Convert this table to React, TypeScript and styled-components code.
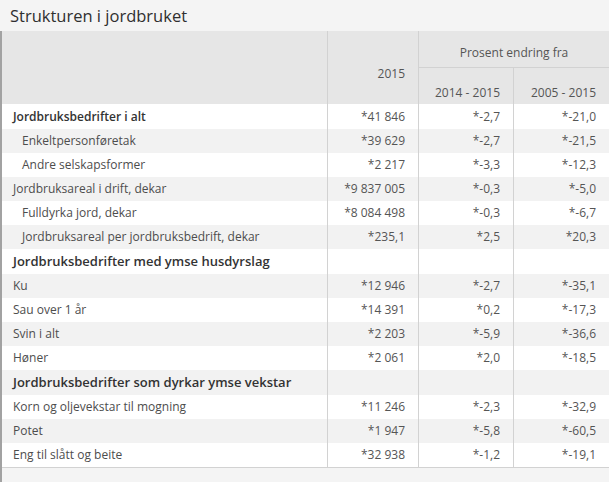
import React from 'react';
import styled, { createGlobalStyle } from 'styled-components';

const Global = createGlobalStyle`
  html, body { margin: 0; padding: 0; background: #f4f4f4; }
  body { font-family: "Open Sans", "Liberation Sans", sans-serif; }
`;

const Page = styled.div`
  width: 609px;
  height: 482px;
  overflow: hidden;
  background: #f4f4f4;
`;

const Title = styled.h2`
  margin: 0;
  height: 31px;
  line-height: 31px;
  padding-left: 10px;
  font-size: 16.5px;
  font-weight: 400;
  color: #2f2f2f;
  background: #f4f4f4;
`;

const Frame = styled.div`
  border-left: 2px solid #a2a2a2;
  height: 451px;
  background: #f4f4f4;
`;

const Table = styled.table`
  width: 607px;
  table-layout: fixed;
  border-collapse: separate;
  border-spacing: 0;
  border-bottom: 1px solid #d2d2d2;
  font-size: 12px;
  color: #4d4d4d;
`;

const HeadCell = styled.th<{ $pt: number; $pb: number; $center?: boolean; $divider?: boolean; $underline?: boolean }>`
  background: #e6e6e6;
  font-weight: 400;
  color: #555;
  line-height: 16px;
  padding: ${(p) => p.$pt}px 13px ${(p) => p.$pb}px;
  text-align: ${(p) => (p.$center ? 'center' : 'right')};
  vertical-align: top;
  border-left: ${(p) => (p.$divider ? '1px solid #d2d2d2' : 'none')};
  border-bottom: ${(p) => (p.$underline ? '1px solid #d2d2d2' : 'none')};
  white-space: nowrap;
`;

const Row = styled.tr`
  background: #fff;
  &:nth-child(even) {
    background: #f2f2f2;
  }
  &:first-child td {
    padding-top: 5px;
  }
`;

const LabelCell = styled.td<{ $kind: 'total' | 'section' | 'item' | 'sub' }>`
  padding: 4px 8px 4px ${(p) => (p.$kind === 'sub' ? 20 : 11)}px;
  font-size: ${(p) => (p.$kind === 'section' ? 13 : 12)}px;
  line-height: ${(p) => (p.$kind === 'section' ? 17 : 16)}px;
  font-weight: ${(p) => (p.$kind === 'section' || p.$kind === 'total' ? 600 : 400)};
  color: ${(p) => (p.$kind === 'section' || p.$kind === 'total' ? '#333' : '#4d4d4d')};
  white-space: nowrap;
  overflow: hidden;
`;

const ValueCell = styled.td`
  padding: 4px 13px 4px 4px;
  line-height: 16px;
  text-align: right;
  border-left: 1px solid #d2d2d2;
  white-space: nowrap;
  color: #555;
`;

type Kind = 'total' | 'section' | 'item' | 'sub';
const rows: { label: string; kind: Kind; v?: [string, string, string] }[] = [
  { label: 'Jordbruksbedrifter i alt', kind: 'total', v: ['*41 846', '*-2,7', '*-21,0'] },
  { label: 'Enkeltpersonføretak', kind: 'sub', v: ['*39 629', '*-2,7', '*-21,5'] },
  { label: 'Andre selskapsformer', kind: 'sub', v: ['*2 217', '*-3,3', '*-12,3'] },
  { label: 'Jordbruksareal i drift, dekar', kind: 'item', v: ['*9 837 005', '*-0,3', '*-5,0'] },
  { label: 'Fulldyrka jord, dekar', kind: 'sub', v: ['*8 084 498', '*-0,3', '*-6,7'] },
  { label: 'Jordbruksareal per jordbruksbedrift, dekar', kind: 'sub', v: ['*235,1', '*2,5', '*20,3'] },
  { label: 'Jordbruksbedrifter med ymse husdyrslag', kind: 'section' },
  { label: 'Ku', kind: 'item', v: ['*12 946', '*-2,7', '*-35,1'] },
  { label: 'Sau over 1 år', kind: 'item', v: ['*14 391', '*0,2', '*-17,3'] },
  { label: 'Svin i alt', kind: 'item', v: ['*2 203', '*-5,9', '*-36,6'] },
  { label: 'Høner', kind: 'item', v: ['*2 061', '*2,0', '*-18,5'] },
  { label: 'Jordbruksbedrifter som dyrkar ymse vekstar', kind: 'section' },
  { label: 'Korn og oljevekstar til mogning', kind: 'item', v: ['*11 246', '*-2,3', '*-32,9'] },
  { label: 'Potet', kind: 'item', v: ['*1 947', '*-5,8', '*-60,5'] },
  { label: 'Eng til slått og beite', kind: 'item', v: ['*32 938', '*-1,2', '*-19,1'] },
];

export default function App() {
  return (
    <Page>
      <Global />
      <Title>Strukturen i jordbruket</Title>
      <Frame>
        <Table>
          <colgroup>
            <col style={{ width: 325 }} />
            <col style={{ width: 91 }} />
            <col style={{ width: 95 }} />
            <col style={{ width: 96 }} />
          </colgroup>
          <thead>
            <tr>
              <HeadCell rowSpan={2} $pt={0} $pb={0} />
              <HeadCell rowSpan={2} $pt={35} $pb={0} $divider>
                2015
              </HeadCell>
              <HeadCell colSpan={2} $pt={14} $pb={6} $center $divider $underline>
                Prosent endring fra
              </HeadCell>
            </tr>
            <tr>
              <HeadCell $pt={17} $pb={3} $divider>
                2014 - 2015
              </HeadCell>
              <HeadCell $pt={17} $pb={3} $divider>
                2005 - 2015
              </HeadCell>
            </tr>
          </thead>
          <tbody>
            {rows.map((r) => (
              <Row key={r.label}>
                <LabelCell $kind={r.kind}>{r.label}</LabelCell>
                <ValueCell>{r.v ? r.v[0] : ''}</ValueCell>
                <ValueCell>{r.v ? r.v[1] : ''}</ValueCell>
                <ValueCell>{r.v ? r.v[2] : ''}</ValueCell>
              </Row>
            ))}
          </tbody>
        </Table>
      </Frame>
    </Page>
  );
}
